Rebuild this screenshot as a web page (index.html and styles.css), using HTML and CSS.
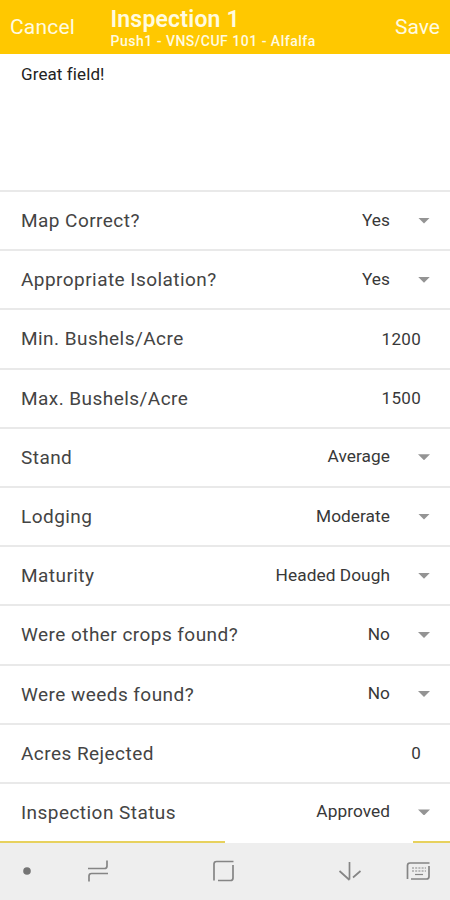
FILE: index.html
```
<!DOCTYPE html>
<html lang="en">
<head>
<meta charset="utf-8">
<title>Inspection 1</title>
<link rel="stylesheet" href="styles.css">
</head>
<body>
<header class="topbar">
  <span class="cancel">Cancel</span>
  <div class="heading"><h1>Inspection 1</h1><p>Push1 - VNS/CUF 101 - Alfalfa</p></div>
  <span class="save">Save</span>
</header>
<main>
  <div class="notes">Great field!</div>
  <div class="row"><span class="label">Map Correct?</span><span class="value">Yes</span><i class="caret"></i></div>
  <div class="row"><span class="label">Appropriate Isolation?</span><span class="value">Yes</span><i class="caret"></i></div>
  <div class="row"><span class="label">Min. Bushels/Acre</span><span class="value number">1200</span></div>
  <div class="row"><span class="label">Max. Bushels/Acre</span><span class="value number">1500</span></div>
  <div class="row"><span class="label">Stand</span><span class="value">Average</span><i class="caret"></i></div>
  <div class="row"><span class="label">Lodging</span><span class="value">Moderate</span><i class="caret"></i></div>
  <div class="row"><span class="label">Maturity</span><span class="value">Headed Dough</span><i class="caret"></i></div>
  <div class="row"><span class="label">Were other crops found?</span><span class="value">No</span><i class="caret"></i></div>
  <div class="row"><span class="label">Were weeds found?</span><span class="value">No</span><i class="caret"></i></div>
  <div class="row"><span class="label">Acres Rejected</span><span class="value number">0</span></div>
  <div class="row"><span class="label">Inspection Status</span><span class="value">Approved</span><i class="caret"></i></div>
</main>
<footer>
  <div class="accent"><i class="accent-left"></i><i class="accent-right"></i></div>
  <svg class="nav" viewBox="0 0 450 57" fill="none" stroke="#858585" stroke-width="1.7">
    <circle cx="27" cy="28" r="3.8" fill="#747474" stroke="none"/>
    <path d="M88 25.500H104.500Q107 25.500 107 23V17.500M108 30.500H91.500Q89 30.500 89 33V38.500"/>
    <path d="M214 37.500V21Q214 18.500 216.500 18.500H233.500M233 22V35Q233 37.500 230.500 37.500H218"/>
    <path d="M349.500 19V36.500M339.500 28L349.500 37M353 34.500L360.500 28"/>
    <path d="M407.500 36V22.500Q407.500 20 410 20H429.500M429 23V33.500Q429 36 426.500 36H411"/>
    <path d="M412 25H426M412 28H426" stroke-dasharray="2 1.200" stroke-width="1.2"/>
    <path d="M415 31.500H423" stroke-width="1.2"/>
  </svg>
</footer>
</body>
</html>
```
FILE: styles.css
```
* { box-sizing: border-box; }
body {
  margin: 0;
  width: 450px;
  height: 900px;
  overflow: hidden;
  display: flex;
  flex-direction: column;
  background: #fff;
  color: #444;
  font-family: Roboto, sans-serif;
}
.topbar {
  display: flex;
  flex: none;
  height: 54px;
  padding: 0 10px;
  background: #ffc800;
  color: #fffbe0;
}
.cancel, .save { font-size: 21px; line-height: 54px; }
.cancel { width: 100.5px; letter-spacing: .2px; }
.heading { flex: 1; padding-top: 7px; }
h1 { margin: 0; font-size: 23px; line-height: 25px; font-weight: 600; letter-spacing: .2px; }
p { margin: 0; font-size: 14px; line-height: 19px; font-weight: 500; letter-spacing: .5px; }
main { flex: none; }
.notes {
  height: 136px;
  padding: 10px 21px;
  font-size: 17px;
  line-height: 20px;
  letter-spacing: .1px;
  color: #222;
}
.row {
  display: flex;
  align-items: center;
  height: 59.2px;
  padding: 0 20px 0 21px;
  border-top: 2px solid #e9e9e9;
}
.label { flex: 1; font-size: 19px; letter-spacing: .45px; }
.value { padding-bottom: 2px; font-size: 17.3px; letter-spacing: .05px; color: #383838; }
.number { margin-right: 9px; padding: 0; font-size: 17px; letter-spacing: .3px; }
.caret {
  width: 12px;
  height: 6px;
  margin-left: 28px;
  background: #949494;
  clip-path: polygon(0 0, 100% 0, 50% 100%);
}
footer { flex: 1; background: #eee; }
.accent { display: flex; justify-content: space-between; height: 2px; background: #fff; }
.accent-left { width: 225px; background: #e7d15d; }
.accent-right { width: 37px; background: #e7d15d; }
.nav { display: block; width: 450px; height: 57px; }
```
